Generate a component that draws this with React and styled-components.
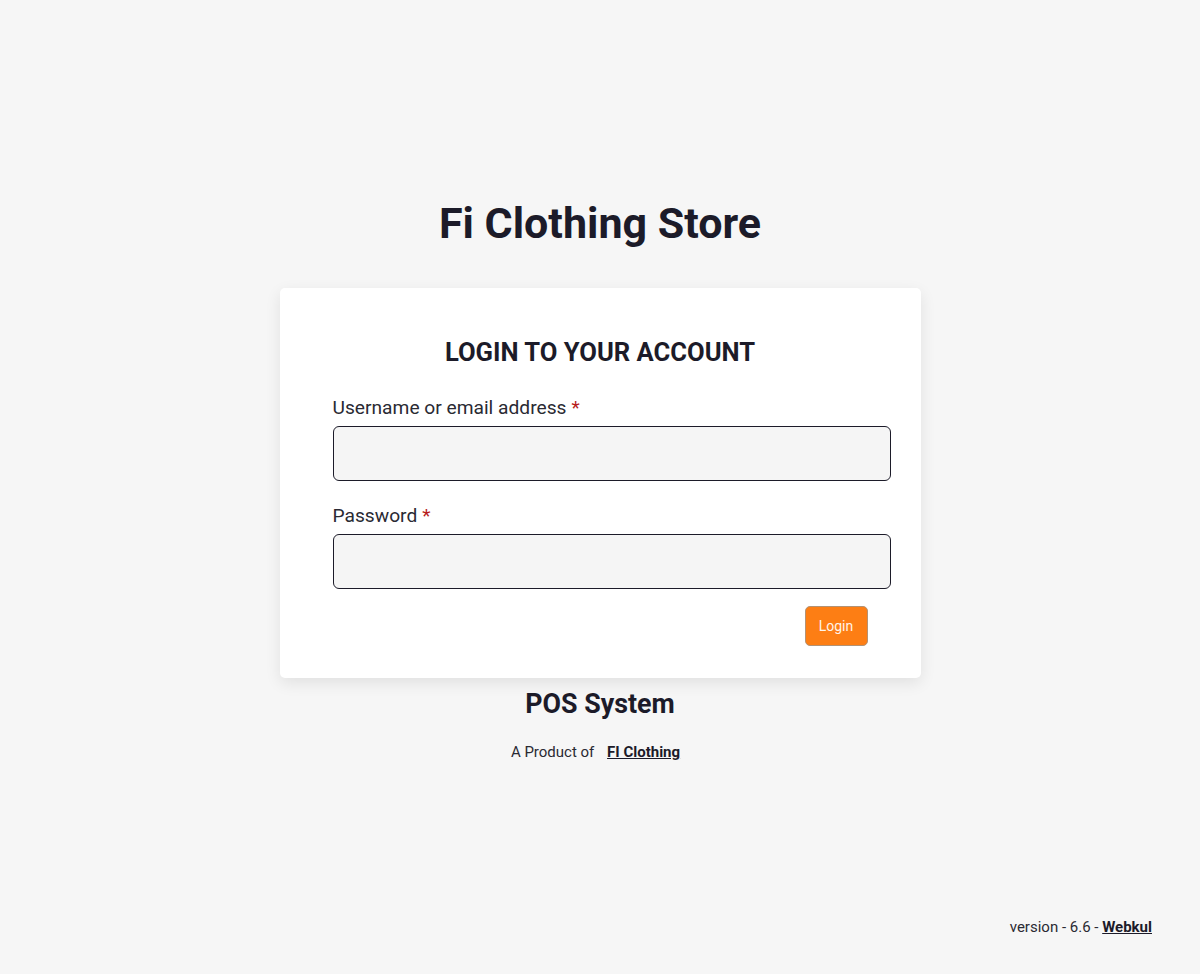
import React from "react";
import styled, { createGlobalStyle } from "styled-components";

const GlobalStyle = createGlobalStyle`
  html, body {
    margin: 0;
    padding: 0;
    background: #f6f6f6;
  }
  body {
    font-family: Roboto, "Liberation Sans", sans-serif;
    color: #1c1b29;
  }
  * {
    box-sizing: border-box;
  }
`;

const Page = styled.div`
  display: flex;
  flex-direction: column;
  min-height: 100vh;
`;

const Main = styled.main`
  display: flex;
  flex-direction: column;
  align-items: center;
  padding-top: 199px;
`;

const StoreTitle = styled.h1`
  margin: 0;
  font-size: 43px;
  line-height: 49px;
  font-weight: 700;
`;

const Card = styled.form`
  display: flex;
  flex-direction: column;
  width: 641px;
  margin-top: 40px;
  padding: 50px 30px 32px 53px;
  background: #ffffff;
  border-radius: 5px;
  box-shadow: 0 5px 16px rgba(0, 0, 0, 0.09);
`;

const CardTitle = styled.h2`
  margin: 0 0 0 -23px;
  text-align: center;
  font-size: 25.6px;
  line-height: 29px;
  font-weight: 700;
  text-transform: uppercase;
`;

const Field = styled.div`
  display: flex;
  flex-direction: column;
  gap: 7px;
  margin-top: ${({ top }) => top}px;
`;

const Label = styled.label`
  font-size: 19.2px;
  line-height: 22px;
  color: #2a2a33;
`;

const Required = styled.span`
  color: #b71c1c;
  margin-left: 5px;
`;

const Input = styled.input`
  width: 100%;
  height: 55px;
  padding: 0 14px;
  border: 1px solid #1c1b29;
  border-radius: 6px;
  background: #f5f5f5;
  font: inherit;
  font-size: 17px;
  outline: none;
`;

const Actions = styled.div`
  display: flex;
  justify-content: flex-end;
  margin-top: 17px;
  padding-right: 23px;
`;

const LoginButton = styled.button`
  width: 63px;
  height: 40px;
  border: 1px solid #b39274;
  border-radius: 5px;
  background: #fd7e14;
  color: #fff4ea;
  font-family: Roboto, "Liberation Sans", sans-serif;
  font-size: 14px;
  cursor: pointer;
`;

const Product = styled.h3`
  margin: 11px 0 0;
  font-size: 26.8px;
  line-height: 31px;
  font-weight: 700;
`;

const ByLine = styled.p`
  margin: 23px 0 0;
  padding-right: 9px;
  font-size: 15px;
  line-height: 18px;
  color: #2a2a33;
`;

const StrongLink = styled.a`
  font-weight: 700;
  color: #1c1b29;
  text-decoration: underline;
  margin-left: ${({ gap }) => gap || 0}px;
`;

const Footer = styled.footer`
  display: flex;
  justify-content: flex-end;
  margin-top: auto;
  padding: 0 48px 38px 0;
  font-size: 15px;
  line-height: 18px;
  color: #2a2a33;
`;

export default function App() {
  return (
    <Page>
      <GlobalStyle />
      <Main>
        <StoreTitle>Fi Clothing Store</StoreTitle>
        <Card onSubmit={(e) => e.preventDefault()}>
          <CardTitle>Login to your account</CardTitle>
          <Field top={30}>
            <Label htmlFor="username">
              Username or email address<Required>*</Required>
            </Label>
            <Input id="username" type="text" />
          </Field>
          <Field top={24}>
            <Label htmlFor="password">
              Password<Required>*</Required>
            </Label>
            <Input id="password" type="password" />
          </Field>
          <Actions>
            <LoginButton type="submit">Login</LoginButton>
          </Actions>
        </Card>
        <Product>POS System</Product>
        <ByLine>
          A Product of <StrongLink href="#" gap={9}>FI Clothing</StrongLink>
        </ByLine>
      </Main>
      <Footer>
        <span>
          version - 6.6 - <StrongLink href="#">Webkul</StrongLink>
        </span>
      </Footer>
    </Page>
  );
}
